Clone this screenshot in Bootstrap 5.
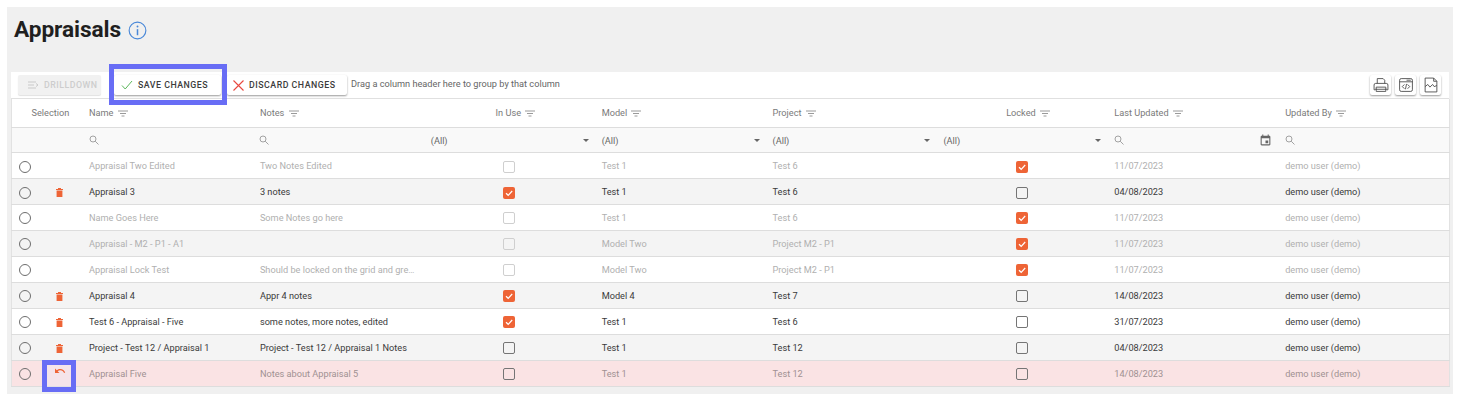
<!DOCTYPE html>
<html lang="en"><head><meta charset="utf-8"><title>Appraisals</title>
<link href="https://cdn.jsdelivr.net/npm/bootstrap@5.3.0/dist/css/bootstrap.min.css" rel="stylesheet">
<style>
html,body{background:#fff;height:404px;overflow:hidden}
body{font-family:Roboto,"Liberation Sans",sans-serif;font-size:9.2px;color:#3a3a3a;padding:7px 10px 10px 7px}
.panel-bg{background:#f0f0f0;height:387px;padding:0 4px}
.page-head{height:65px;padding:8px 3px 0}
.page-title{font-size:22.7px;font-weight:700;color:#1f1f1f;margin:0;line-height:30px;letter-spacing:-.1px}
.info-ic{margin:6px 0 0 -1px}
.grid-box{background:#fff}
.tool-row{height:27px;padding:3px 8px 0 7px;border-bottom:1px solid #e0e0e0;color:#666}
.tb{height:20px;padding:0 0 0 7px;display:inline-flex;align-items:center;gap:5px;border:0;background:#fff;box-shadow:0 1px 2px rgba(0,0,0,.4);border-radius:2px;font:500 8.8px Roboto,sans-serif;letter-spacing:.5px;color:#3c3c3c;white-space:nowrap;flex:none}
.tb-off{background:#f1f1f1;color:#cdcdcd;box-shadow:0 1px 1px rgba(0,0,0,.12);width:83px;padding-left:10px}
.tb-hl{width:107px;margin-left:13px;position:relative}
.tb-hl::after{content:"";position:absolute;left:-5px;right:-6px;top:-11px;bottom:-10px;border:5px solid #686df5}
.tb-d{margin-left:6px;width:120px;padding-left:6px}
.icon-btn{width:21px;height:20px;padding:0;justify-content:center;gap:0}
.grp-hint{margin-left:4px;line-height:18px}
.dg{table-layout:fixed;width:1438px;border-collapse:collapse;margin:0;background:#fff;border-left:1px solid #e2e2e2;border-right:1px solid #e2e2e2}
.dg td,.dg th{height:25.95px;padding:0 6.5px;border-bottom:1px solid #ddd;white-space:nowrap;vertical-align:middle;font-weight:400}
.dg .hd th{height:28px;color:#7a7a7a;font-size:9.2px}
.dg .hd svg{margin-left:2px}
.dg .flt td{background:#f9f9f9;color:#666;padding-top:1px}
.flt-in{display:flex;align-items:center;justify-content:space-between}
.sr-ic{display:block;margin:-1px 0 0 -.5px}
.dg tr.alt td{background:#f4f4f4}
.dg tr.dim td{color:#b0b0b0}
.dg tr.gone td{background:#fae3e4;color:#a09192}
.tc{text-align:center}
.dg th.tc-h{text-align:center;padding-left:18px}
.dg td.tc{padding-right:8px}
.rad{display:inline-block;width:12px;height:12px;border:1.5px solid #6d6d6d;border-radius:50%;vertical-align:middle}
.cbx{display:inline-block;width:12px;height:12px;border:1.4px solid #757575;border-radius:2px;vertical-align:middle}
.dim .cbx.off{border-color:#cfcfcf}
.cbx.on{border:0;background:#ee6436}
.cbx.on svg{display:block}
.undo-wrap{position:relative;display:inline-block;line-height:0}
.undo-wrap svg{position:relative;z-index:1;margin-top:-5px;display:block}
.undo-wrap::after{content:"";position:absolute;left:-11.500px;right:-10px;top:-9.500px;bottom:-15px;border:5px solid #686df5;background:rgba(235,232,250,.3)}
.dg td.nc{padding:0 10px 0 0;text-align:center}
.dg td.pc{padding:0 0 0 7px}
</style></head><body>
<div class="panel-bg">
<div class="page-head d-flex align-items-start gap-2">
<h1 class="page-title">Appraisals</h1>
<svg class="info-ic" width="19" height="19" viewBox="0 0 20 20" fill="none" stroke="#4a88d8" stroke-width="1.2"><circle cx="10" cy="10" r="8.800"/><path d="M10 8.600v6.400" stroke-width="1.600"/><circle cx="10" cy="5.800" r="1" fill="#4a88d8" stroke="none"/></svg>
</div>
<div class="grid-box">
<div class="tool-row d-flex align-items-start">
<button class="tb tb-off" type="button"><svg width="11" height="8" viewBox="0 0 11 8" fill="none" stroke="#c9c9c9"><path d="M0 1h8M0 4h6M0 7h8M8 2.500 10 4 8 5.500"/></svg>DRILLDOWN</button>
<button class="tb tb-hl" type="button"><svg width="12" height="10" viewBox="0 0 12 10" fill="none" stroke="#5cb85c"><path d="M1 5.500 4.200 9 11 1"/></svg>SAVE CHANGES</button>
<button class="tb tb-d" type="button"><svg width="11" height="11" viewBox="0 0 11 11" fill="none" style="stroke:#e8483f;stroke-width:1.100"><path d="M.5.5l10 10M10.500.5l-10 10"/></svg>DISCARD CHANGES</button>
<span class="grp-hint">Drag a column header here to group by that column</span>
<span class="ms-auto d-flex gap-1">
<button class="tb icon-btn" type="button"><svg width="16" height="16" viewBox="0 0 15 15" fill="none" stroke="#444" stroke-width=".8"><path d="M4 6V1.500h5.500L11 3v3M2 12H1V7.500Q1 6 2.500 6h10Q14 6 14 7.500V12h-1M3 9.500h9v4H3z"/><path d="M2 11.500h11"/></svg></button>
<button class="tb icon-btn" type="button"><svg width="16" height="16" viewBox="0 0 15 15" fill="none" stroke="#444" stroke-width=".8"><rect x="1.500" y="1.500" width="12" height="12" rx="1.500"/><path d="M1.500 4.500h12M6 7 4 9l2 2M9 7l2 2-2 2M8 6.500l-1 5M8 3h4"/></svg></button>
<button class="tb icon-btn" type="button"><svg width="16" height="16" viewBox="0 0 15 15" fill="none" stroke="#444" stroke-width=".8"><path d="M2 1h8l3 3v10H2zM10 1v3h3M2 9l2.500-2 2 2.500L9 7l1.500 2L13 8"/></svg></button>
</span>
</div>
<table class="dg">
<colgroup><col style="width:35px"><col style="width:36px"><col style="width:170.875px"><col style="width:170.875px"><col style="width:170.875px"><col style="width:170.875px"><col style="width:170.875px"><col style="width:170.875px"><col style="width:170.875px"><col style="width:170.875px"></colgroup>
<thead id="hh"></thead>
<tbody id="rows"></tbody>
</table>
</div>
</div>
<script>
var F='<svg width="10" height="7" viewBox="0 0 10 7" stroke="#9a9a9a"><path d="M0 1h10M2 3.500h6M3.500 6h3"/></svg>';
var S='<svg class="sr-ic" width="10" height="10" viewBox="0 0 10 10" fill="none" stroke="#a2a2a2"><circle cx="4" cy="4" r="3"/><path d="M6.200 6.200 9.500 9.500"/></svg>';
var D='<div class="flt-in">(All)<svg width="6" height="3" viewBox="0 0 6 3" fill="#666"><path d="M0 0h6L3 3z"/></svg></div>';
var K='<svg width="13" height="13" viewBox="0 0 24 24" fill="#666"><path d="M17 12h-5v5h5v-5zM16 1v2H8V1H6v2H5c-1.110 0-1.990.9-1.990 2L3 19c0 1.100.89 2 2 2h14c1.100 0 2-.9 2-2V5c0-1.100-.9-2-2-2h-1V1h-2zm3 18H5V8h14v11z"/></svg>';
document.getElementById('hh').innerHTML='<tr class="hd"><th colspan="2"><span style="margin-left:13px">Selection</span></th><th>Name '+F+'</th><th>Notes '+F+'</th><th class="tc-h">In Use '+F+'</th><th>Model '+F+'</th><th>Project '+F+'</th><th class="tc-h">Locked '+F+'</th><th>Last Updated '+F+'</th><th>Updated By '+F+'</th></tr>'+
'<tr class="flt"><td colspan="2"></td><td>'+S+'</td><td>'+S+'</td><td>'+D+'</td><td>'+D+'</td><td>'+D+'</td><td>'+D+'</td><td><div class="flt-in">'+S+K+'</div></td><td>'+S+'</td></tr>';
var T='<svg width="7" height="9" viewBox="0 0 7 9" fill="#ee6436"><path d="M0 1h7v1H0zM2 0h3v1H2zM.6 2.500h5.800V9H.6z"/></svg>';
var U='<span class="undo-wrap"><svg width="12" height="12" viewBox="0 0 24 24" fill="#ee6436"><path d="M12.500 8c-2.650 0-5.050.99-6.900 2.600L2 7v9h9l-3.620-3.620c1.390-1.160 3.160-1.880 5.120-1.880 3.540 0 6.550 2.310 7.600 5.500l2.370-.78C21.080 11.030 17.150 8 12.500 8z"/></svg></span>';
var C='<svg width="12" height="12" viewBox="0 0 12 12" fill="none" stroke="#fff" stroke-width="1.200"><path d="M3 6.200 5.200 8.300 9.200 4"/></svg>';
var R=[
['dim','','Appraisal Two Edited','Two Notes Edited',0,'Test 1','Test 6',1,'11/07/2023'],
['alt','t','Appraisal 3','3 notes',1,'Test 1','Test 6',0,'04/08/2023'],
['dim','','Name Goes Here','Some Notes go here',0,'Test 1','Test 6',1,'11/07/2023'],
['dim alt','','Appraisal - M2 - P1 - A1','',0,'Model Two','Project M2 - P1',1,'11/07/2023'],
['dim','','Appraisal Lock Test','Should be locked on the grid and gre\u2026',0,'Model Two','Project M2 - P1',1,'11/07/2023'],
['alt','t','Appraisal 4','Appr 4 notes',1,'Model 4','Test 7',0,'14/08/2023'],
['','t','Test 6 - Appraisal - Five','some notes, more notes, edited',1,'Test 1','Test 6',0,'31/07/2023'],
['alt','t','Project - Test 12 / Appraisal 1','Project - Test 12 / Appraisal 1 Notes',0,'Test 1','Test 12',0,'04/08/2023'],
['gone','u','Appraisal Five','Notes about Appraisal 5',0,'Test 1','Test 12',0,'14/08/2023']];
function B(v){return v?'<span class="cbx on">'+C+'</span>':'<span class="cbx off"></span>'}
document.getElementById('rows').innerHTML=R.map(function(r){return '<tr class="'+r[0]+'"><td class="pc"><span class="rad"></span></td><td class="nc">'+(r[1]=='t'?T:r[1]=='u'?U:'')+'</td><td>'+r[2]+'</td><td>'+r[3]+'</td><td class="tc">'+B(r[4])+'</td><td>'+r[5]+'</td><td>'+r[6]+'</td><td class="tc">'+B(r[7])+'</td><td>'+r[8]+'</td><td>demo user (demo)</td></tr>'}).join('');
</script>
<script src="https://cdn.jsdelivr.net/npm/bootstrap@5.3.0/dist/js/bootstrap.bundle.min.js"></script>
</body></html>
